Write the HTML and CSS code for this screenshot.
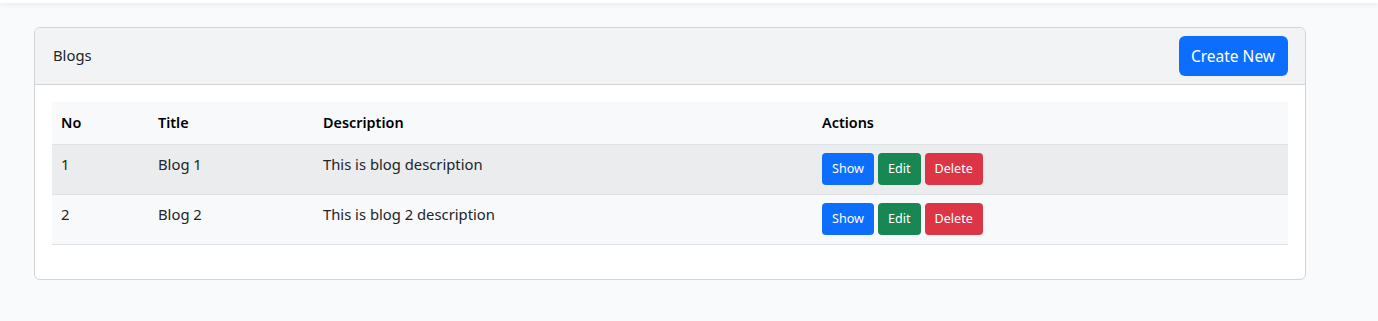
FILE: index.html
```html
<!DOCTYPE html>
<html lang="en">
<head>
    <meta charset="UTF-8">
    <meta name="viewport" content="width=device-width, initial-scale=1.0">
    <title>Blogs</title>
    <link rel="stylesheet" href="styles.css">
</head>
<body>
    <div class="navbar"></div>

    <main class="page">
        <div class="card">
            <div class="card-header">
                <span>Blogs</span>
                <a href="#" class="btn btn-primary">Create New</a>
            </div>
            <div class="card-body">
                <table class="table">
                    <thead>
                        <tr>
                            <th class="col-no">No</th>
                            <th class="col-title">Title</th>
                            <th class="col-desc">Description</th>
                            <th>Actions</th>
                        </tr>
                    </thead>
                    <tbody>
                        <tr class="striped">
                            <td>1</td>
                            <td>Blog 1</td>
                            <td>This is blog description</td>
                            <td>
                                <div class="actions">
                                    <a href="#" class="btn-sm btn-primary">Show</a>
                                    <a href="#" class="btn-sm btn-success">Edit</a>
                                    <button type="button" class="btn-sm btn-danger">Delete</button>
                                </div>
                            </td>
                        </tr>
                        <tr>
                            <td>2</td>
                            <td>Blog 2</td>
                            <td>This is blog 2 description</td>
                            <td>
                                <div class="actions">
                                    <a href="#" class="btn-sm btn-primary">Show</a>
                                    <a href="#" class="btn-sm btn-success">Edit</a>
                                    <button type="button" class="btn-sm btn-danger">Delete</button>
                                </div>
                            </td>
                        </tr>
                    </tbody>
                </table>
            </div>
        </div>
    </main>
</body>
</html>
```

FILE: styles.css
```css
* {
    margin: 0;
    padding: 0;
    box-sizing: border-box;
}

body {
    font-family: 'Noto Sans', sans-serif;
    font-size: 14.8px;
    color: #212529;
    background: #f8fafc;
}

.navbar {
    height: 3px;
    background: #fff;
    box-shadow: 0 2px 4px rgba(0, 0, 0, 0.075);
}

.page {
    padding: 24px 72px 0 34px;
}

.card {
    background: #fff;
    border: 1px solid #d3d4d5;
    border-radius: 6px;
}

.card-header {
    display: flex;
    justify-content: space-between;
    align-items: center;
    height: 57px;
    padding: 0 17px 0 18px;
    background: #f2f3f4;
    border-bottom: 1px solid #d3d4d5;
    border-radius: 6px 6px 0 0;
}

.card-header span {
    margin-top: -2px;
}

.card-body {
    padding: 17px 17px 18px;
}

.btn {
    display: inline-block;
    height: 40px;
    line-height: 40px;
    padding: 0 13px 0 12px;
    font-size: 15.5px;
    color: #fff;
    text-decoration: none;
    border-radius: 6px;
}

.btn-primary {
    background: #0d6efd;
}

.btn-success {
    background: #198754;
}

.btn-danger {
    background: #dc3545;
}

.table {
    width: 100%;
    border-collapse: collapse;
    margin-bottom: 16px;
    background: #f8f9fa;
}

.table th,
.table td {
    text-align: left;
    vertical-align: top;
    padding: 0 8px 0 9px;
}

.table th {
    height: 42px;
    vertical-align: middle;
    font-size: 14.4px;
    font-weight: 600;
    color: #000;
    border-bottom: 1px solid #dee2e6;
}

.table td {
    height: 50px;
    padding-top: 9px;
    border-bottom: 1px solid #dee2e6;
}

.table .striped td {
    background: #ebeced;
}

.col-no {
    width: 97px;
}

.col-title {
    width: 165px;
}

.col-desc {
    width: 499px;
}

.actions {
    display: flex;
    gap: 4px;
    margin-top: -1px;
}

.btn-sm {
    display: inline-block;
    height: 32px;
    line-height: 32px;
    padding: 0 10px;
    font-family: inherit;
    font-size: 12.6px;
    color: #fff;
    text-decoration: none;
    border: none;
    border-radius: 4px;
}
```
